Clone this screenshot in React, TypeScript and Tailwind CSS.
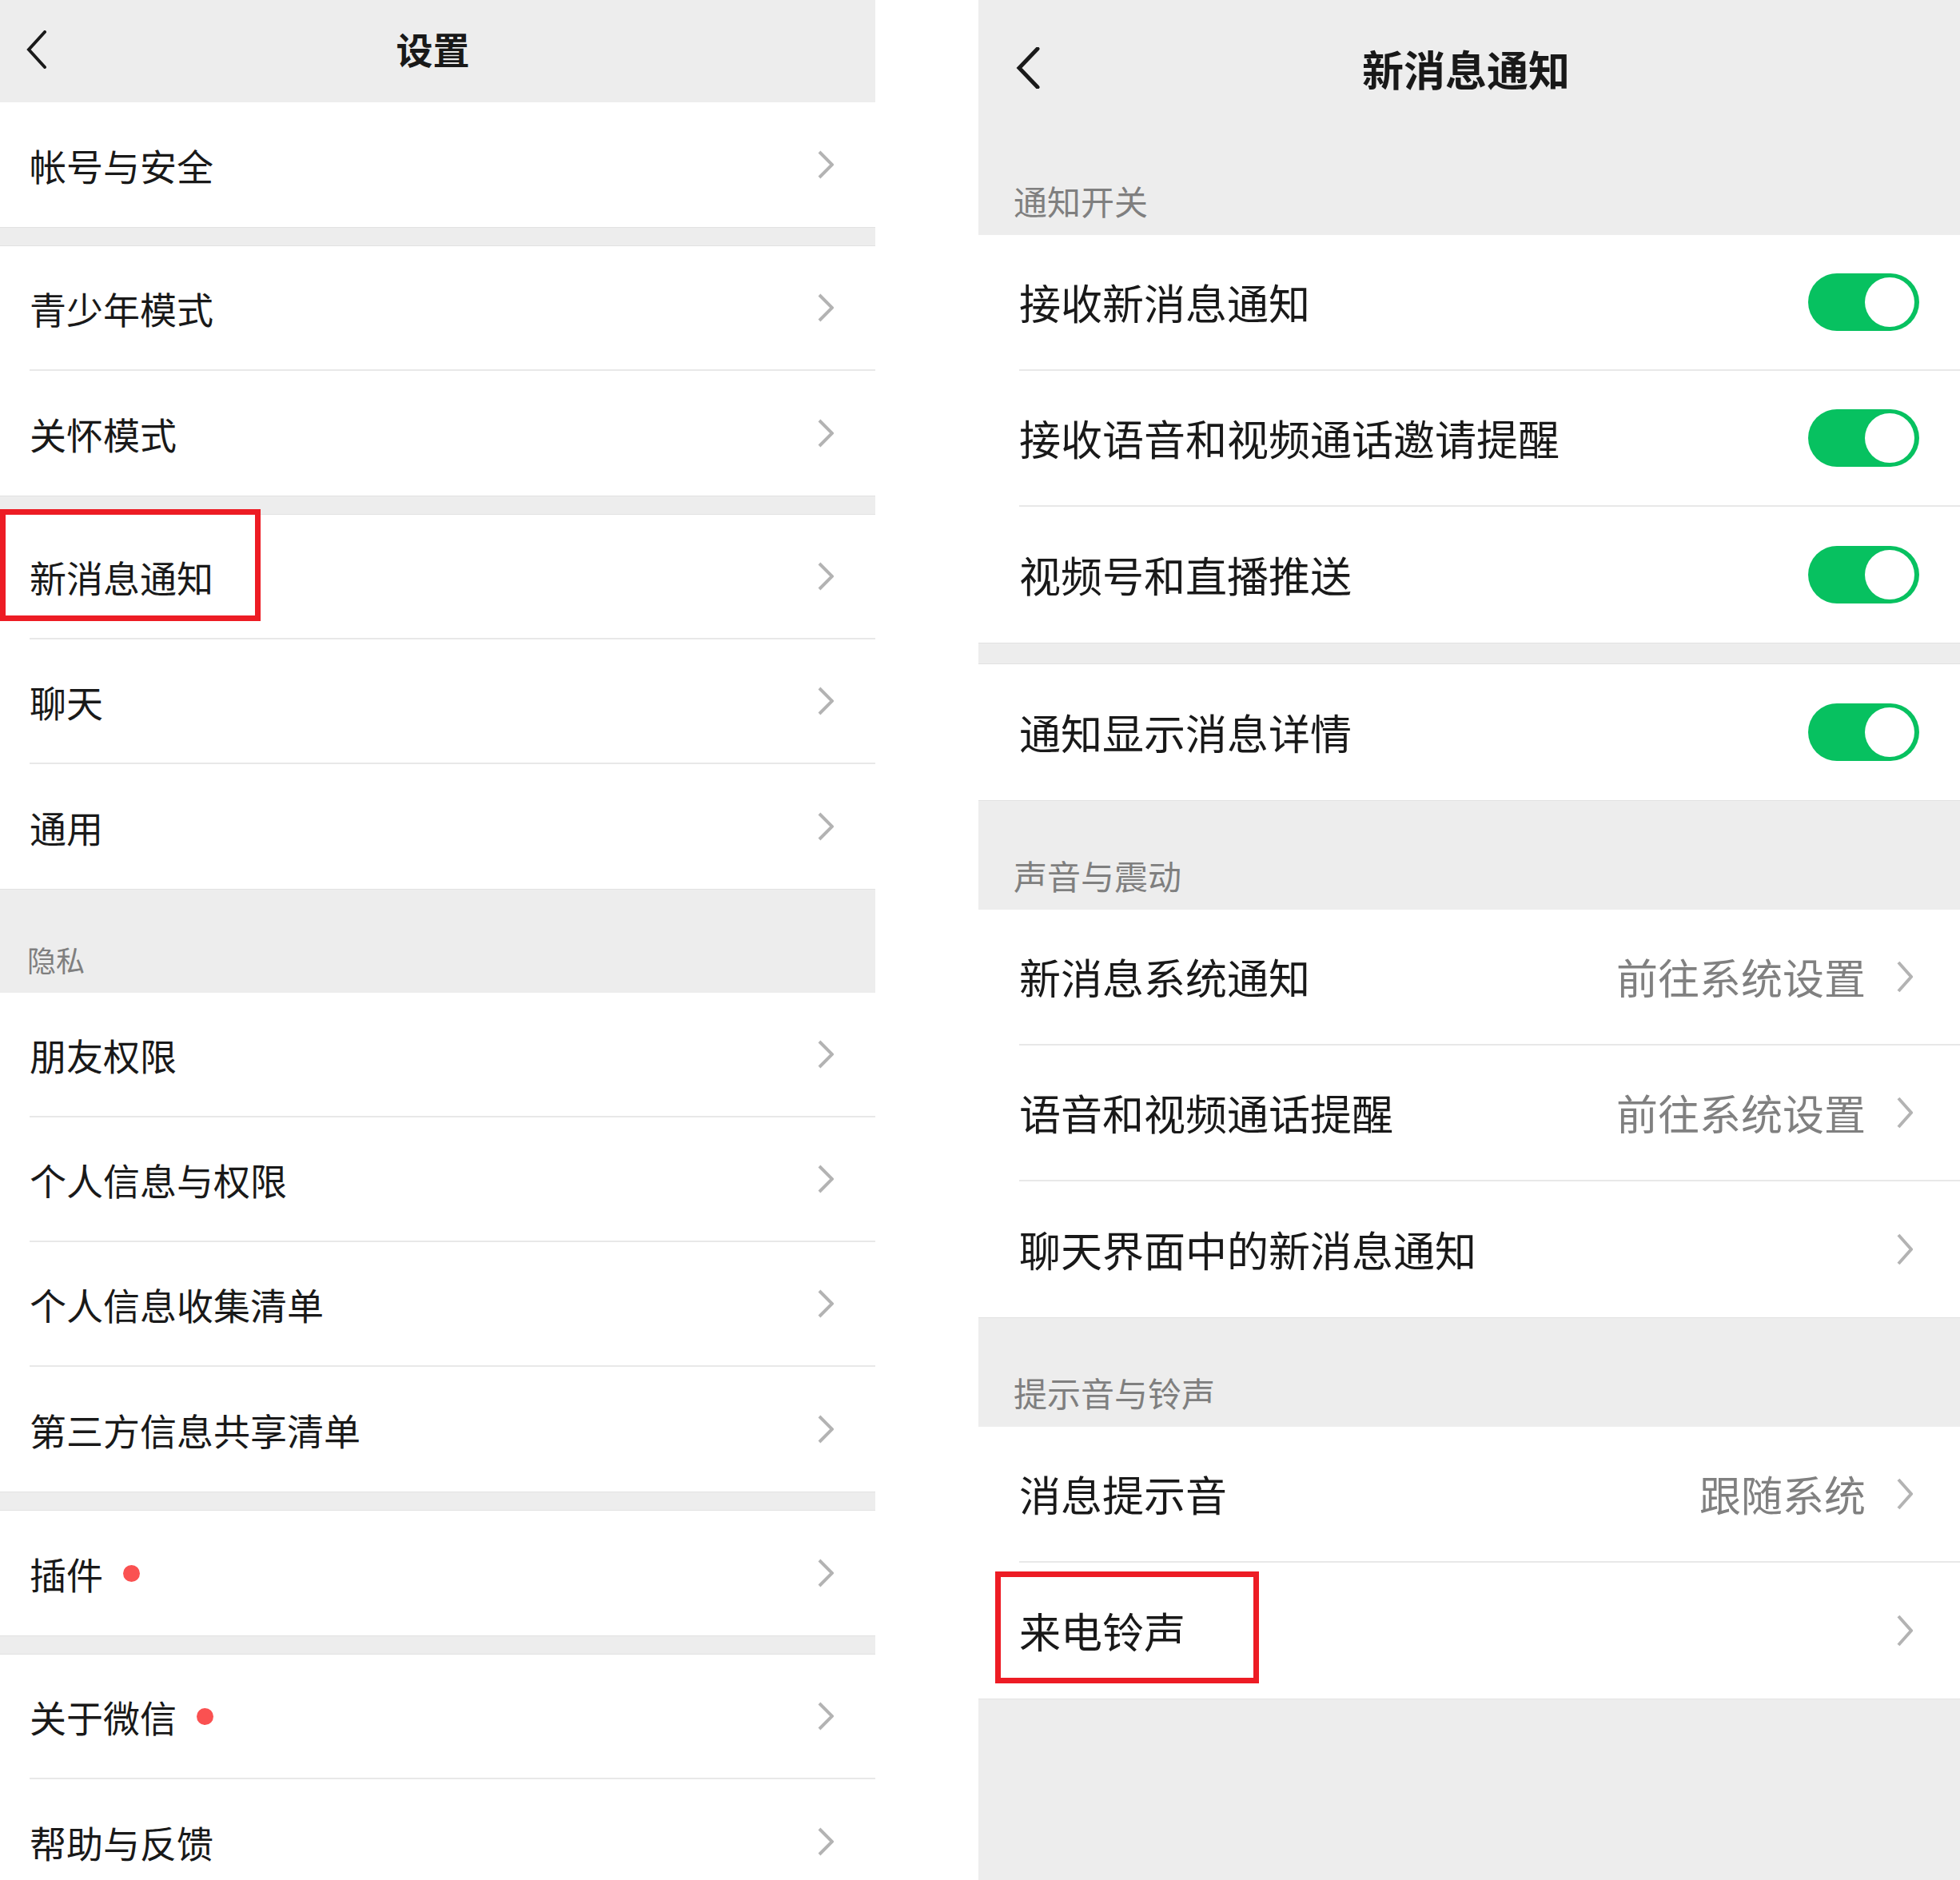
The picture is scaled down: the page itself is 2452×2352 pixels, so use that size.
const font = { fontFamily: '"Noto Sans CJK SC", "Noto Sans", sans-serif' };

function Chevron({ big }: { big?: boolean }) {
  return big ? (
    <svg width="20" height="40" viewBox="0 0 20 40" className="shrink-0">
      <polyline points="2,2 18,20 2,38" fill="none" stroke="#b3b3b3" strokeWidth="4" strokeLinejoin="miter" />
    </svg>
  ) : (
    <svg width="20" height="36" viewBox="0 0 20 36" className="shrink-0">
      <polyline points="2,2 18,18 2,34" fill="none" stroke="#b3b3b3" strokeWidth="4" strokeLinejoin="miter" />
    </svg>
  );
}

function Back({ big }: { big?: boolean }) {
  return big ? (
    <svg width="30" height="52" viewBox="0 0 30 52">
      <polyline points="27,2 4,26 27,50" fill="none" stroke="#1a1a1a" strokeWidth="5" strokeLinecap="round" />
    </svg>
  ) : (
    <svg width="26" height="48" viewBox="0 0 26 48">
      <polyline points="23,2 3,24 23,46" fill="none" stroke="#1a1a1a" strokeWidth="4" strokeLinecap="round" />
    </svg>
  );
}

function Toggle() {
  return (
    <div className="w-[139px] h-[72px] rounded-full bg-[#07c160] flex items-center justify-end pr-[6px] shrink-0">
      <div className="w-[62px] h-[62px] rounded-full bg-white" />
    </div>
  );
}

function LeftRow({ label, dot, last }: { label: string; dot?: boolean; last?: boolean }) {
  return (
    <div className="bg-white pl-[37px] shrink-0">
      <div className={`h-[156px] flex items-center pr-[52px] ${last ? "" : "border-b-2 border-[#e8e8e8]"}`}>
        <span className="text-[46px] leading-none text-[#191919]">{label}</span>
        {dot && <span className="ml-[25px] w-[21px] h-[21px] rounded-full bg-[#fa5151]" />}
        <div className="flex-1" />
        <Chevron />
      </div>
    </div>
  );
}

function RightRow({
  label,
  value,
  toggle,
  last,
}: {
  label: string;
  value?: string;
  toggle?: boolean;
  last?: boolean;
}) {
  return (
    <div className="bg-white pl-[51px] shrink-0">
      <div
        className={`h-[170px] flex items-center ${toggle ? "pr-[51px]" : "pr-[59px]"} ${
          last ? "" : "border-b-2 border-[#e8e8e8]"
        }`}
      >
        <span className="text-[52px] leading-none text-[#191919]">{label}</span>
        <div className="flex-1" />
        {value && <span className="text-[52px] leading-none text-[#808080] mr-[39px]">{value}</span>}
        {toggle ? <Toggle /> : <Chevron big />}
      </div>
    </div>
  );
}

function Gap({ h }: { h: string }) {
  return <div className={`${h} shrink-0 bg-[#ededed] border-y border-[#e2e2e2]`} />;
}

export default function App() {
  return (
    <div className="w-[2452px] h-[2352px] bg-white flex overflow-hidden" style={font}>
      {/* left: 设置 */}
      <div className="relative w-[1095px] h-full bg-[#ededed] flex flex-col overflow-hidden">
        <div className="h-[128px] shrink-0 flex items-center relative">
          <div className="absolute left-[33px] top-[38px]">
            <Back />
          </div>
          <div className="flex-1 text-center text-[46px] font-semibold text-[#191919] pr-[12px] pb-[8px]">设置</div>
        </div>
        <LeftRow label="帐号与安全" last />
        <Gap h="h-[24px]" />
        <LeftRow label="青少年模式" />
        <LeftRow label="关怀模式" last />
        <Gap h="h-[24px]" />
        <LeftRow label="新消息通知" />
        <LeftRow label="聊天" />
        <LeftRow label="通用" last />
        <div className="h-[130px] shrink-0 flex items-end pl-[34px] pb-[20px] border-t border-[#e2e2e2]">
          <span className="text-[36px] text-[#7f7f7f] leading-[1.2]">隐私</span>
        </div>
        <LeftRow label="朋友权限" />
        <LeftRow label="个人信息与权限" />
        <LeftRow label="个人信息收集清单" />
        <LeftRow label="第三方信息共享清单" last />
        <Gap h="h-[24px]" />
        <LeftRow label="插件" dot last />
        <Gap h="h-[24px]" />
        <LeftRow label="关于微信" dot />
        <LeftRow label="帮助与反馈" last />

        {/* annotation */}
        <div className="absolute left-0 top-[637px] w-[326px] h-[140px] border-[7px] border-[#ed1c24]" />
      </div>

      <div className="w-[129px] shrink-0" />

      {/* right: 新消息通知 */}
      <div className="relative w-[1228px] h-full bg-[#ededed] flex flex-col">
        <div className="h-[157px] shrink-0 flex items-center relative">
          <div className="absolute left-[47px] top-[59px]">
            <Back big />
          </div>
          <div className="flex-1 text-center text-[52px] font-semibold text-[#191919] pr-[8px] pt-[14px]">
            新消息通知
          </div>
        </div>
        <div className="h-[137px] shrink-0 flex items-end pl-[44px] pb-[18px]">
          <span className="text-[42px] text-[#7f7f7f] leading-[1.2]">通知开关</span>
        </div>
        <RightRow label="接收新消息通知" toggle />
        <RightRow label="接收语音和视频通话邀请提醒" toggle />
        <RightRow label="视频号和直播推送" toggle last />
        <Gap h="h-[27px]" />
        <RightRow label="通知显示消息详情" toggle last />
        <div className="h-[137px] shrink-0 flex items-end pl-[44px] pb-[18px] border-t border-[#e2e2e2]">
          <span className="text-[42px] text-[#7f7f7f] leading-[1.2]">声音与震动</span>
        </div>
        <RightRow label="新消息系统通知" value="前往系统设置" />
        <RightRow label="语音和视频通话提醒" value="前往系统设置" />
        <RightRow label="聊天界面中的新消息通知" last />
        <div className="h-[137px] shrink-0 flex items-end pl-[44px] pb-[18px] border-t border-[#e2e2e2]">
          <span className="text-[42px] text-[#7f7f7f] leading-[1.2]">提示音与铃声</span>
        </div>
        <RightRow label="消息提示音" value="跟随系统" />
        <RightRow label="来电铃声" last />
        <div className="flex-1 border-t border-[#e2e2e2]" />

        {/* annotation */}
        <div className="absolute left-[21px] top-[1966px] w-[330px] h-[140px] border-[7px] border-[#ed1c24]" />
      </div>
    </div>
  );
}
